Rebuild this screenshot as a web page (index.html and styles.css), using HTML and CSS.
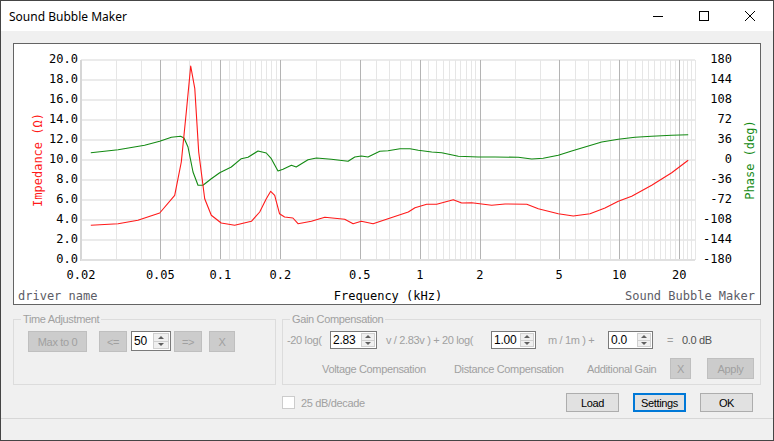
FILE: index.html
```html
<!DOCTYPE html>
<html lang="en">
<head>
    <meta charset="UTF-8">
    <title>Sound Bubble Maker</title>
    <link rel="stylesheet" href="styles.css">
</head>
<body>
    <div class="window">
        <div class="titlebar">
            <span class="title">Sound Bubble Maker</span>
            <div class="caption-buttons">
                <span class="caption-btn">
                    <svg width="10" height="10" viewBox="0 0 10 10"><path d="M0 5.5h10" stroke="#000" stroke-width="1"/></svg>
                </span>
                <span class="caption-btn">
                    <svg width="10" height="10" viewBox="0 0 10 10"><rect x="0.5" y="0.5" width="9" height="9" fill="none" stroke="#000" stroke-width="1"/></svg>
                </span>
                <span class="caption-btn">
                    <svg width="10" height="10" viewBox="0 0 10 10"><path d="M0 0L10 10M10 0L0 10" stroke="#000" stroke-width="1"/></svg>
                </span>
            </div>
        </div>

        <div class="client">
            <div class="chart">
                <svg id="plot" width="746" height="260"></svg>
            </div>

            <div class="groups">
                <fieldset class="group time-group">
                    <legend>Time Adjustment</legend>
                    <div class="time-row">
                        <button class="btn btn-max" disabled>Max to 0</button>
                        <button class="btn btn-step btn-left" disabled>&lt;=</button>
                        <div class="spin spin-time">
                            <span class="spin-value">50</span>
                            <span class="spin-arrows"><i class="up"></i><i class="down"></i></span>
                        </div>
                        <button class="btn btn-step btn-right" disabled>=&gt;</button>
                        <button class="btn btn-clear" disabled>X</button>
                    </div>
                </fieldset>

                <fieldset class="group gain-group">
                    <legend>Gain Compensation</legend>
                    <div class="gain-row">
                        <span class="lbl lbl-db">-20 log(</span>
                        <div class="spin spin-gain">
                            <span class="spin-value">2.83</span>
                            <span class="spin-arrows"><i class="up"></i><i class="down"></i></span>
                        </div>
                        <span class="lbl lbl-volt">v / 2.83v ) + 20 log(</span>
                        <div class="spin spin-gain spin-short">
                            <span class="spin-value">1.00</span>
                            <span class="spin-arrows"><i class="up"></i><i class="down"></i></span>
                        </div>
                        <span class="lbl lbl-dist">m / 1m ) +</span>
                        <div class="spin spin-gain spin-short">
                            <span class="spin-value">0.0</span>
                            <span class="spin-arrows"><i class="up"></i><i class="down"></i></span>
                        </div>
                        <span class="lbl lbl-eq">=</span>
                        <span class="lbl result">0.0 dB</span>
                    </div>
                    <div class="caption-row">
                        <span class="lbl cap-volt">Voltage Compensation</span>
                        <span class="lbl cap-dist">Distance Compensation</span>
                        <span class="lbl cap-add">Additional Gain</span>
                        <button class="btn btn-gain-x" disabled>X</button>
                        <button class="btn btn-apply" disabled>Apply</button>
                    </div>
                </fieldset>
            </div>

            <div class="footer">
                <label class="check">
                    <span class="check-box"></span>
                    <span class="lbl">25 dB/decade</span>
                </label>
                <div class="dialog-buttons">
                    <button class="btn">Load</button>
                    <button class="btn btn-focus">Settings</button>
                    <button class="btn">OK</button>
                </div>
            </div>

            <div class="statusbar"></div>
        </div>
    </div>

    <script src="chart.js"></script>
</body>
</html>
```

FILE: styles.css
```css
* {
    margin: 0;
    padding: 0;
    box-sizing: border-box;
}

body {
    font-family: "Liberation Sans", Arial, sans-serif;
    font-size: 11px;
    letter-spacing: -0.35px;
    background: #3a3a3a;
}

.window {
    width: 774px;
    height: 441px;
    border: 1px solid #454545;
    background: #f0f0f0;
    display: flex;
    flex-direction: column;
}

/* title bar */

.titlebar {
    height: 30px;
    background: #fff;
    display: flex;
    align-items: center;
    justify-content: space-between;
}

.title {
    font-family: "Noto Sans", "Open Sans", sans-serif;
    font-size: 12px;
    letter-spacing: 0;
    color: #000;
    padding-left: 8px;
}

.caption-buttons {
    display: flex;
    height: 100%;
}

.caption-btn {
    width: 46px;
    height: 100%;
    display: flex;
    align-items: center;
    justify-content: center;
}

.caption-btn svg {
    display: block;
    shape-rendering: crispEdges;
}

/* client area */

.client {
    flex: 1;
    display: flex;
    flex-direction: column;
}

.chart {
    width: 748px;
    height: 262px;
    margin: 12px 0 0 12px;
    border: 1px solid #646464;
    background: #fff;
}

.chart svg {
    display: block;
}

.chart svg text {
    font-family: "DejaVu Sans Mono", "Liberation Mono", monospace;
    font-size: 12px;
    letter-spacing: 0;
}

.groups {
    display: flex;
    gap: 6px;
    margin: 7px 0 0 12px;
}

.group {
    border: 1px solid #dcdcdc;
    min-width: 0;
    color: #a0a0a0;
}

.group legend {
    margin-left: 7px;
    padding: 0 2px;
    line-height: 14px;
}

.time-group {
    width: 263px;
    height: 73px;
}

.gain-group {
    width: 479px;
    height: 73px;
}

.lbl {
    white-space: nowrap;
}

/* buttons */

.btn {
    height: 21px;
    border: 1px solid #adadad;
    background: #e1e1e1;
    font-family: inherit;
    font-size: 11px;
    letter-spacing: inherit;
    color: #000;
}

.btn:disabled {
    background: #cccccc;
    border-color: #bfbfbf;
    color: #a0a0a0;
}

.btn-focus {
    border: 2px solid #0078d7;
}

.time-row {
    display: flex;
    align-items: flex-start;
    margin: 5px 0 0 14px;
}

.btn-max {
    width: 59px;
}

.btn-step {
    width: 28px;
}

.btn-left {
    margin-left: 12px;
}

.btn-right {
    margin-left: 3px;
}

.btn-clear {
    width: 26px;
    margin-left: 7px;
}

/* numeric up-down */

.spin {
    display: flex;
    height: 20px;
    border: 1px solid #7a7a7a;
    background: #fff;
    color: #000;
}

.spin-time {
    width: 40px;
    margin-left: 4px;
}

.spin-value {
    flex: 1;
    padding: 2px 0 0 2px;
    font-size: 12px;
    letter-spacing: -0.2px;
}

.spin-arrows {
    width: 16px;
    margin: 1px;
    display: flex;
    flex-direction: column;
    border: 1px solid #d0d0d0;
    background: #f0f0f0;
}

.spin-arrows i {
    flex: 1;
    display: flex;
    align-items: center;
    justify-content: center;
}

.spin-arrows i.up {
    border-bottom: 1px solid #d0d0d0;
}

.spin-arrows i::after {
    content: "";
    border-left: 3px solid transparent;
    border-right: 3px solid transparent;
}

.spin-arrows i.up::after {
    border-bottom: 3px solid #606060;
}

.spin-arrows i.down::after {
    border-top: 3px solid #606060;
}

/* gain compensation */

.gain-row {
    display: flex;
    align-items: center;
    margin: 5px 0 0 4px;
}

.lbl-db {
    width: 43px;
}

.spin-gain {
    width: 47px;
    height: 18px;
}

.spin-gain .spin-value {
    padding-top: 1px;
}

.spin-gain .spin-arrows {
    width: 14px;
}

.spin-short {
    width: 45px;
}

.lbl-volt {
    width: 105px;
    margin-left: 9px;
}

.lbl-dist {
    width: 60px;
    margin-left: 12px;
}

.lbl-eq {
    margin-left: 14px;
}

.result {
    margin-left: 9px;
    color: #505050;
}

.caption-row {
    display: flex;
    align-items: center;
    margin: 9px 0 0 39px;
}

.cap-volt {
    width: 132px;
}

.cap-dist {
    width: 133px;
}

.cap-add {
    width: 83px;
}

.btn-gain-x {
    width: 21px;
}

.btn-apply {
    width: 47px;
    margin-left: 16px;
}

/* footer */

.footer {
    display: flex;
    align-items: center;
    justify-content: space-between;
    margin: 8px 20px 0 281px;
    height: 19px;
}

.check {
    display: flex;
    align-items: center;
    gap: 6px;
    color: #a0a0a0;
}

.check-box {
    width: 13px;
    height: 13px;
    border: 1px solid #cccccc;
    background: #fff;
}

.dialog-buttons {
    display: flex;
    gap: 14px;
}

.dialog-buttons .btn {
    width: 53px;
    height: 19px;
}

.statusbar {
    margin-top: 6px;
    border-top: 1px solid #d7d7d7;
    flex: 1;
}
```

FILE: chart.js
```js
// Impedance / phase plot on a log frequency axis

const SVG_NS = 'http://www.w3.org/2000/svg';

const plot = {
    left: 67,
    right: 681,
    top: 16,
    bottom: 216,
    fMin: 0.02,
    fMax: 24,
    zMax: 20
};

// [kHz, ohm]
const impedance = [
    [0.0224, 3.47], [0.0307, 3.63], [0.0386, 3.97], [0.0496, 4.70], [0.0590, 6.47],
    [0.0637, 9.8], [0.0675, 14.8], [0.0710, 19.4], [0.0744, 17.13], [0.0779, 10.8],
    [0.0834, 6.13], [0.0901, 4.47], [0.101, 3.7], [0.118, 3.47], [0.143, 3.87],
    [0.1575, 4.8], [0.170, 6.13], [0.1788, 6.87], [0.1872, 6.47], [0.198, 4.63],
    [0.210, 4.3], [0.231, 4.2], [0.245, 3.63], [0.286, 3.87], [0.334, 4.27],
    [0.420, 4.07], [0.463, 3.63], [0.509, 3.87], [0.583, 3.63], [0.693, 4.13],
    [0.876, 4.8], [0.946, 5.23], [1.083, 5.57], [1.216, 5.57], [1.473, 6.03],
    [1.623, 5.7], [1.822, 5.73], [2.294, 5.47], [2.676, 5.6], [3.44, 5.57],
    [3.93, 5.13], [4.95, 4.63], [5.89, 4.4], [7.14, 4.63], [8.49, 5.2],
    [9.90, 5.87], [11.56, 6.37], [14.56, 7.47], [18.34, 8.73], [22.2, 9.97]
];

// [kHz, degrees]
const phase = [
    [0.0224, 13.1], [0.0307, 18.5], [0.0417, 26.5], [0.0496, 33.7], [0.0568, 40.9],
    [0.0632, 42.7], [0.0657, 39.6], [0.0688, 23.4], [0.0729, -21.6], [0.0772, -45.5],
    [0.0818, -45.5], [0.0901, -33.7], [0.0992, -22.9], [0.1134, -12.6], [0.1273, 2.3],
    [0.1376, 4.9], [0.1544, 16.2], [0.170, 12.6], [0.180, 2.3], [0.1945, -19.8],
    [0.206, -16.7], [0.227, -9.5], [0.240, -12.6], [0.275, 0.5], [0.303, 3.6],
    [0.360, 1.3], [0.437, -2.3], [0.472, 5.4], [0.509, 7.2], [0.550, 5.4],
    [0.630, 15.7], [0.693, 16.7], [0.796, 20.3], [0.893, 20.3], [0.983, 17.5],
    [1.148, 14.4], [1.288, 13.1], [1.560, 6.7], [1.966, 5.4], [2.384, 5.4],
    [3.12, 4.9], [3.64, 1.8], [4.16, 3.1], [4.95, 8.5], [5.78, 16.2],
    [6.74, 23.4], [8.17, 32.4], [9.90, 37.3], [12.01, 40.9], [14.56, 42.7],
    [18.34, 44.5], [22.2, 45.5]
];

const majorFreqs = [0.05, 0.1, 0.2, 0.5, 1, 2, 5, 10, 20];
const labelFreqs = [0.02, 0.05, 0.1, 0.2, 0.5, 1, 2, 5, 10, 20];

// minor grid: [from, to, step]
const minorRanges = [
    [0.02, 0.2, 0.01],
    [0.2, 2, 0.1],
    [2, 24, 1]
];

function xOf(f) {
    const span = Math.log10(plot.fMax / plot.fMin);
    return plot.left + (plot.right - plot.left) * Math.log10(f / plot.fMin) / span;
}

function yOfZ(z) {
    return plot.bottom - (plot.bottom - plot.top) * z / plot.zMax;
}

function yOfPhase(deg) {
    return plot.bottom - (plot.bottom - plot.top) * (deg + 180) / 360;
}

function el(name, attrs, text) {
    const node = document.createElementNS(SVG_NS, name);
    for (const key in attrs) {
        node.setAttribute(key, attrs[key]);
    }
    if (text !== undefined) {
        node.textContent = text;
    }
    return node;
}

function line(svg, x1, y1, x2, y2, color, width) {
    svg.appendChild(el('line', {
        x1: x1, y1: y1, x2: x2, y2: y2,
        stroke: color, 'stroke-width': width || 1
    }));
}

function label(svg, x, y, text, anchor, color) {
    svg.appendChild(el('text', {
        x: x, y: y,
        'text-anchor': anchor || 'start',
        fill: color || '#000'
    }, text));
}

function curve(svg, data, yOf, color) {
    const pts = data.map(function(p) {
        return xOf(p[0]).toFixed(1) + ',' + yOf(p[1]).toFixed(1);
    });
    svg.appendChild(el('polyline', {
        points: pts.join(' '),
        fill: 'none',
        stroke: color,
        'stroke-width': 1.1,
        'stroke-linejoin': 'round'
    }));
}

function drawChart(svg) {
    const isMajor = function(f) {
        return majorFreqs.some(function(m) { return Math.abs(m - f) < 1e-6; });
    };

    // horizontal grid
    for (let i = 1; i <= 10; i++) {
        const y = yOfZ(i * 2);
        line(svg, plot.left, y, plot.right, y, '#e4e4e4', 1.5);
    }

    // minor vertical grid
    minorRanges.forEach(function(r) {
        const count = Math.round((r[1] - r[0]) / r[2]);
        for (let i = 1; i <= count; i++) {
            const f = r[0] + i * r[2];
            if (isMajor(f)) continue;
            const x = Math.round(xOf(f)) + 0.5;
            line(svg, x, plot.top, x, plot.bottom, '#e6e6e6');
        }
    });

    // major vertical grid
    majorFreqs.forEach(function(f) {
        const x = Math.round(xOf(f)) + 0.5;
        line(svg, x, plot.top, x, plot.bottom, '#b4b4b4');
    });

    // axes
    line(svg, plot.left, plot.top, plot.left, plot.bottom + 1, '#d6d6d6', 2);
    line(svg, plot.left, plot.bottom, plot.right, plot.bottom, '#e0e0e0', 2);

    curve(svg, phase, yOfPhase, '#138a13');
    curve(svg, impedance, yOfZ, '#ff1a1a');

    // y labels, impedance on the left and phase on the right
    for (let i = 0; i <= 10; i++) {
        const y = yOfZ(i * 2) + 3;
        label(svg, 64, y, (i * 2).toFixed(1), 'end');
        label(svg, 718, y, String(i * 36 - 180), 'end');
    }

    // frequency labels
    labelFreqs.forEach(function(f) {
        label(svg, xOf(f), 235, String(f), 'middle');
    });

    label(svg, 4, 256, 'driver name', 'start', '#5c5c66');
    label(svg, (plot.left + plot.right) / 2, 256, 'Frequency (kHz)', 'middle');
    label(svg, 741, 256, 'Sound Bubble Maker', 'end', '#5c5c66');

    svg.appendChild(el('text', {
        x: 24, y: 116,
        'text-anchor': 'middle',
        'dominant-baseline': 'central',
        transform: 'rotate(-90 24 116)',
        fill: '#ff1a1a'
    }, 'Impedance (\u03a9)'));

    svg.appendChild(el('text', {
        x: 736, y: 116,
        'text-anchor': 'middle',
        'dominant-baseline': 'central',
        transform: 'rotate(-90 736 116)',
        fill: '#138a13'
    }, 'Phase (deg)'));
}

document.addEventListener('DOMContentLoaded', function() {
    const svg = document.getElementById('plot');
    if (!svg) return;
    drawChart(svg);
});
```
